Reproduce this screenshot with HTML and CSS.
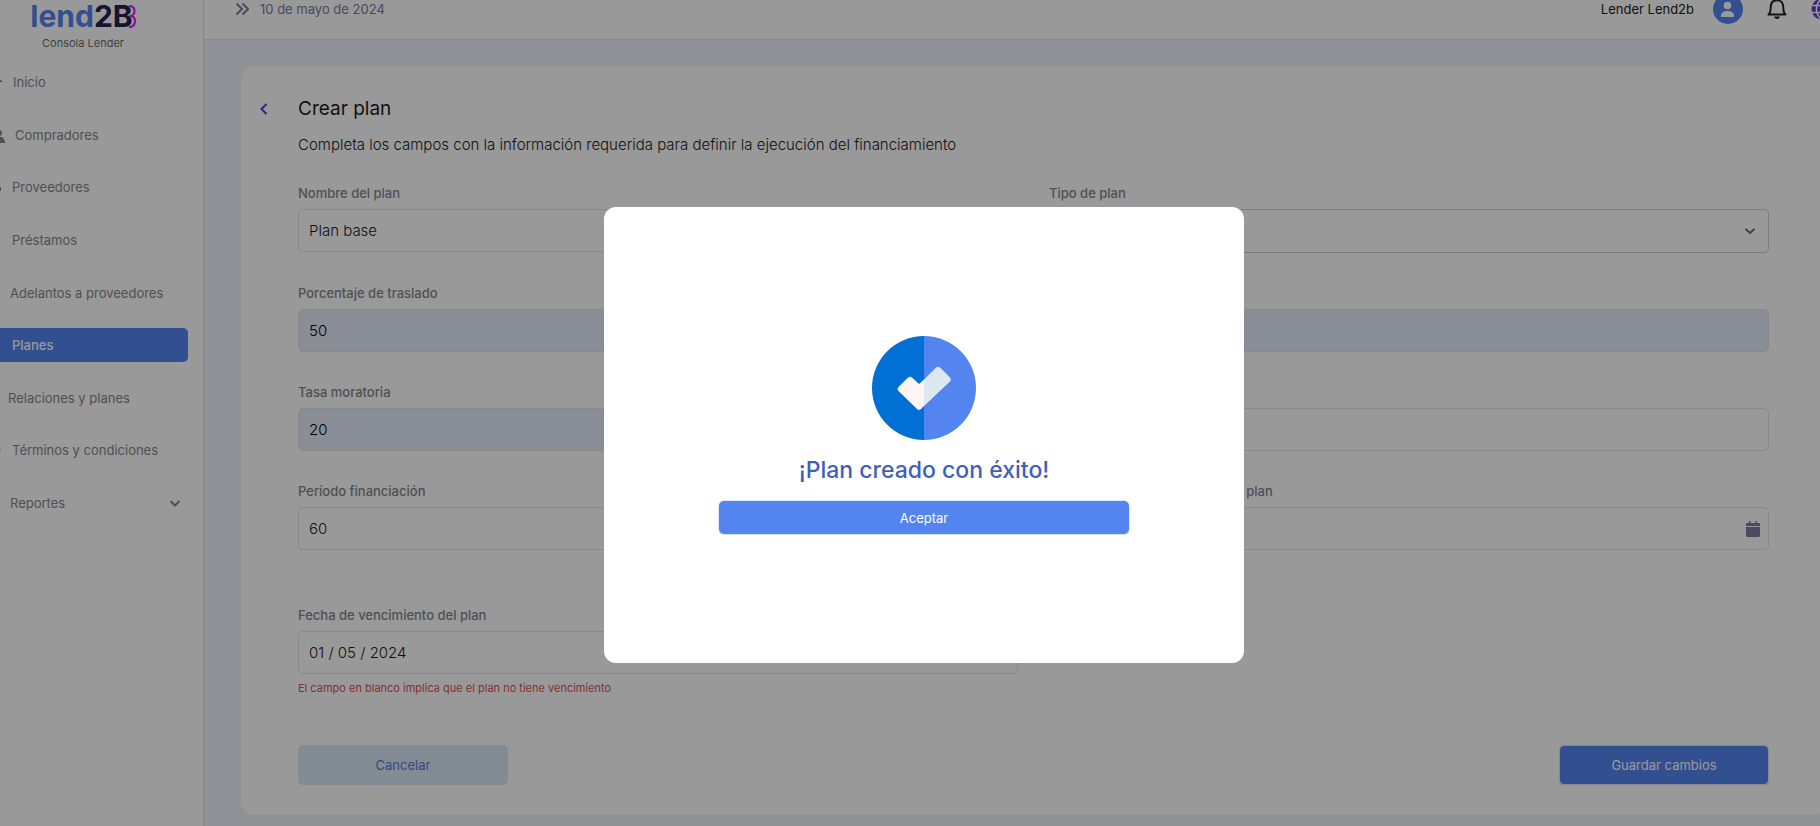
FILE: index.html
```html
<!DOCTYPE html>
<html lang="es">
<head>
  <meta charset="UTF-8" />
  <meta name="viewport" content="width=device-width, initial-scale=1.0">
  <title>Crear plan | lend2B</title>
  <link rel="stylesheet" href="styles.css">
</head>
<body>

  <div class="app">

    <!-- Menú lateral -->
    <aside class="sidebar">
      <div class="brand">
        <div class="logo">
          <span>lend</span><span class="logo-dark">2B</span>
          <svg class="logo-shadow" width="7" height="23" viewBox="0 0 7 23"><path d="M0 1c4 0 5.500 2 5.500 4.800S3.500 10.500 2 11c2.500.5 4 2.500 4 5.200C6 20 3.500 22 0 22"/></svg>
        </div>
        <p class="brand-sub">Consola Lender</p>
      </div>
      <nav class="menu">
        <a href="#" class="menu-item">
          <svg width="21" height="18" viewBox="0 0 21 18"><path d="M10.500 0L21 9h-3v8h-5v-6H8v6H3V9H0z"/></svg>
          Inicio
        </a>
        <a href="#" class="menu-item">
          <svg width="23" height="18" viewBox="0 0 23 18"><circle cx="8" cy="5" r="4"/><path d="M0 17c0-9 16-9 16 0z"/><circle cx="17" cy="7" r="3"/><path d="M17 17h6c0-5-3-7-8-6 1 1 2 3 2 6z"/></svg>
          Compradores
        </a>
        <a href="#" class="menu-item">
          <svg width="20" height="18" viewBox="0 0 20 18"><path d="M1 4h11v9H1zM13 7h4l2 3v3h-6z"/><circle cx="5" cy="14" r="2"/><circle cx="15" cy="14" r="2"/></svg>
          Proveedores
        </a>
        <a href="#" class="menu-item">
          <svg width="20" height="18" viewBox="0 0 20 18"><path d="M1 11h4l4 2h4l4-3 1 2-6 5H1z"/><circle cx="10" cy="5" r="4"/></svg>
          Préstamos
        </a>
        <a href="#" class="menu-item">
          <svg width="18" height="18" viewBox="0 0 18 18"><path d="M1 4h15v10H1z"/></svg>
          Adelantos a proveedores
        </a>
        <a href="#" class="menu-item active">
          <svg width="20" height="18" viewBox="0 0 20 18"><path d="M2 1h13v16H2z"/></svg>
          Planes
        </a>
        <a href="#" class="menu-item">
          <svg width="16" height="18" viewBox="0 0 16 18"><path d="M1 2h6v6H1zM8 10h6v6H8z"/></svg>
          Relaciones y planes
        </a>
        <a href="#" class="menu-item">
          <svg width="20" height="18" viewBox="0 0 20 18"><path d="M2 1h10v16H2zM13 10l5-2 1 1-5 4z"/></svg>
          Términos y condiciones
        </a>
        <a href="#" class="menu-item">
          <svg width="18" height="18" viewBox="0 0 18 18"><path d="M1 9h4v8H1zM6 4h4v13H6zM11 7h4v10h-4z"/></svg>
          Reportes
          <svg class="menu-arrow" width="12" height="12" viewBox="0 0 12 12"><path d="M1.500 4L6 8.500 10.500 4"/></svg>
        </a>
      </nav>
    </aside>

    <div class="content">

      <!-- Barra superior -->
      <header class="topbar">
        <svg class="collapse" width="14" height="14" viewBox="0 0 14 14"><path d="M1.500 1.500L7 7l-5.500 5.500M7.500 1.500L13 7l-5.500 5.500"/></svg>
        <span class="date">10 de mayo de 2024</span>
        <span class="user-name">Lender Lend2b</span>
        <svg class="avatar" width="30" height="30" viewBox="0 0 30 30"><circle cx="15" cy="15" r="15" fill="#5484f0"/><circle cx="14.500" cy="11.500" r="3.800" fill="#fff"/><path d="M8 23v-1.500c0-3 3-4.500 6.500-4.500s6.500 1.500 6.500 4.500V23z" fill="#fff"/></svg>
        <svg class="bell" width="20" height="22" viewBox="0 0 20 22"><path d="M1.500 16.500h17c-1.800-1.600-2.200-3.500-2.200-7C16.300 5 14 2.300 10 2.300S3.700 5 3.700 9.500c0 3.500-.4 5.400-2.200 7z" fill="none" stroke="#222" stroke-width="2" stroke-linejoin="round"/><path d="M7.300 18.500h5.400a2.700 2.400 0 0 1-5.400 0z" fill="#222"/></svg>
        <svg class="globe" width="22" height="22" viewBox="0 0 22 22"><circle cx="11" cy="11" r="10.500" fill="#5b3fd0"/><path d="M0 7.500h22M0 14.500h22M11 0v22M11 0C3.500 6 3.500 16 11 22M11 0c7.500 6 7.500 16 0 22" fill="none" stroke="#fff" stroke-width="1.400"/></svg>
      </header>

      <!-- Formulario -->
      <main class="card">
        <div class="card-head">
          <button type="button" class="back" aria-label="Volver">
            <svg width="8" height="12" viewBox="0 0 8 12"><path d="M6.500 1L1.500 6l5 5"/></svg>
          </button>
          <h1>Crear plan</h1>
        </div>
        <p class="intro">Completa los campos con la información requerida para definir la ejecución del financiamiento</p>

        <form class="plan-form">
          <div class="field">
            <label for="nombre">Nombre del plan</label>
            <input type="text" id="nombre" value="Plan base">
          </div>
          <div class="field">
            <label for="tipo">Tipo de plan</label>
            <div class="select-box">
              <select id="tipo"><option></option></select>
              <svg class="select-arrow" width="12" height="12" viewBox="0 0 12 12"><path d="M1.500 4L6 8 10.500 4"/></svg>
            </div>
          </div>
          <div class="field">
            <label for="traslado">Porcentaje de traslado</label>
            <input type="text" id="traslado" class="filled" value="50">
          </div>
          <div class="field">
            <label for="tasa">Tasa corriente</label>
            <input type="text" id="tasa" class="filled">
          </div>
          <div class="field">
            <label for="mora">Tasa moratoria</label>
            <input type="text" id="mora" class="filled" value="20">
          </div>
          <div class="field">
            <label for="gracia">Días de gracia</label>
            <input type="text" id="gracia">
          </div>
          <div class="field">
            <label for="periodo">Período financiación</label>
            <input type="text" id="periodo" value="60">
          </div>
          <div class="field field-date">
            <label for="inicio">Fecha de puesta en marcha del plan</label>
            <div class="date-box">
              <input type="text" id="inicio">
              <svg class="calendar" width="14" height="16" viewBox="0 0 14 16"><path d="M0 5V3.200C0 2.500.5 2 1.200 2H3V0h1.500v2h5V0H11v2h1.800c.7 0 1.200.5 1.200 1.200V5zM0 6h14v8.500c0 .8-.6 1.500-1.500 1.500h-11C.6 16 0 15.300 0 14.500z"/></svg>
            </div>
          </div>
          <div class="field">
            <label for="vencimiento">Fecha de vencimiento del plan</label>
            <input type="text" id="vencimiento" value="01 / 05 / 2024">
            <p class="hint">El campo en blanco implica que el plan no tiene vencimiento</p>
          </div>

          <div class="actions">
            <button type="button" class="btn btn-light">Cancelar</button>
            <button type="submit" class="btn btn-primary">Guardar cambios</button>
          </div>
        </form>
      </main>
    </div>
  </div>

  <!-- Modal de confirmación -->
  <div class="overlay">
    <div class="modal" role="dialog" aria-modal="true" aria-labelledby="modalTitle">
      <svg class="modal-icon" width="104" height="104" viewBox="0 0 104 104">
        <path d="M52 0a52 52 0 0 0 0 104z" fill="#0070d4"/>
        <path d="M52 0a52 52 0 0 1 0 104z" fill="#5484f0"/>
        <path d="M52 43.500L47 48l-7-6.500q-2-1.500-4 0L26.500 51q-2 2 0 4L45 73q2 2 4 0l3-3z" fill="#fff5f4"/>
        <path d="M52 43.500L64 31.500q2-1.500 4 0l10 10q1.500 2 0 4L52 70z" fill="#dde9f0"/>
      </svg>
      <h2 id="modalTitle">¡Plan creado con éxito!</h2>
      <button type="button" class="btn-accept">Aceptar</button>
    </div>
  </div>

</body>
</html>
```
FILE: styles.css
```css
/* ================================
   Variables
================================= */
:root {
  --color-bg: #f0f2fa;
  --color-primary: #5484f0;
  --color-primary-light: #dae8f8;
  --color-filled: #e5edfa;
  --color-text: #1c1c1c;
  --color-muted: #84868c;
  --color-border: #e2e3e6;
  --color-violet: #5b34e0;
  --color-error: #e05050;
  --font-main: Inter, "Liberation Sans", sans-serif;
}

/* ================================
   Base
================================= */
* {
  margin: 0;
  padding: 0;
  box-sizing: border-box;
}

body {
  font-family: var(--font-main);
  font-size: 13px;
  background: var(--color-bg);
  color: var(--color-text);
  overflow: hidden;
}

a {
  color: inherit;
  text-decoration: none;
}

button, input, select {
  font-family: inherit;
}

button {
  cursor: pointer;
}

.app {
  display: flex;
  min-height: calc(100vh + 21px);
  margin: -21px 0 0 -37px;
}

/* ================================
   Menú lateral
================================= */
.sidebar {
  width: 241px;
  flex-shrink: 0;
  background: #fff;
  border-right: 1px solid var(--color-border);
}

.brand {
  padding-top: 19px;
  text-align: center;
}

.logo {
  display: flex;
  align-items: center;
  justify-content: center;
  font-size: 30px;
  line-height: 36px;
  font-weight: 700;
  color: var(--color-primary);
}

.logo-dark {
  color: #2b214d;
}

.logo-shadow {
  margin-left: -4px;
  fill: none;
  stroke: #e815f5;
  stroke-width: 2;
}

.brand-sub {
  font-size: 11px;
  line-height: 18px;
  color: #6c6c6c;
}

.menu {
  display: flex;
  flex-direction: column;
  justify-content: space-between;
  height: 455px;
  margin-top: 13px;
  padding: 0 15px;
}

.menu-item {
  display: flex;
  align-items: center;
  gap: 10px;
  height: 34px;
  padding: 0 7px 0 4px;
  border-radius: 5px;
  color: var(--color-muted);
}

.menu-item svg {
  fill: currentColor;
}

.menu-item.active {
  background: var(--color-primary);
  color: #fff;
  font-weight: 500;
}

.menu-item .menu-arrow {
  margin-left: auto;
  fill: none;
  stroke: currentColor;
  stroke-width: 2;
}

/* ================================
   Barra superior
================================= */
.content {
  flex: 1;
  min-width: 0;
}

.topbar {
  display: flex;
  align-items: center;
  height: 61px;
  margin-right: -13px;
  background: #fff;
  border-bottom: 1px solid var(--color-border);
  padding-left: 31px;
}

.collapse {
  fill: none;
  stroke: #7d7a99;
  stroke-width: 2;
}

.date {
  margin-left: 11px;
  color: #7d7a99;
}

.user-name {
  margin-left: auto;
}

.avatar {
  margin-left: 19px;
}

.bell {
  margin-left: 24px;
}

.globe {
  margin-left: 24px;
}

/* ================================
   Tarjeta y formulario
================================= */
.card {
  margin: 26px -6px 0 37px;
  padding: 31px 57px 30px;
  background: #fff;
  border-radius: 12px;
}

.card-head {
  display: flex;
  align-items: center;
  margin-left: -38px;
}

.back {
  display: flex;
  width: 38px;
  border: 0;
  background: none;
}

.back svg {
  fill: none;
  stroke: var(--color-violet);
  stroke-width: 2;
}

h1 {
  font-size: 19px;
  line-height: 24px;
  font-weight: 400;
}

.intro {
  margin-top: 14px;
  font-size: 15px;
  line-height: 20px;
  font-weight: 300;
}

.plan-form {
  display: grid;
  grid-template-columns: 1fr 1fr;
  gap: 30px 31px;
  margin-top: 28px;
}

.field label {
  display: block;
  margin-bottom: 6px;
  line-height: 20px;
  font-weight: 500;
  color: var(--color-muted);
}

.field input,
.field select {
  display: block;
  width: 100%;
  height: 43px;
  padding: 0 10px;
  border: 1px solid var(--color-border);
  border-radius: 5px;
  background: #fff;
  color: var(--color-text);
  font-size: 15px;
  font-weight: 300;
}

.field input.filled {
  background: var(--color-filled);
  color: #000;
}

.field select {
  height: 44px;
  border-color: #cccdd4;
  appearance: none;
}

.select-box,
.date-box {
  position: relative;
}

.select-arrow {
  position: absolute;
  top: 16px;
  right: 13px;
  fill: none;
  stroke: #6c6e76;
  stroke-width: 2;
}

.field-date {
  margin-bottom: 25px;
}

.calendar {
  position: absolute;
  top: 14px;
  right: 9px;
  fill: #7f7ba0;
}

.hint {
  margin-top: 6px;
  font-size: 11px;
  line-height: 16px;
  color: var(--color-error);
}

.actions {
  grid-column: 1 / -1;
  display: flex;
  justify-content: space-between;
  margin-top: 19px;
}

.btn {
  width: 210px;
  height: 40px;
  border: 1px solid var(--color-border);
  border-radius: 5px;
  font-size: 13px;
}

.btn-light {
  border-color: var(--color-primary-light);
  background: var(--color-primary-light);
  color: #5a78e0;
}

.btn-primary {
  background: var(--color-primary);
  color: #fff;
}

/* ================================
   Modal
================================= */
.overlay {
  position: fixed;
  inset: 0;
  display: flex;
  align-items: center;
  justify-content: center;
  padding: 44px 0 0 28px;
  background: rgba(0, 0, 0, 0.4);
}

.modal {
  display: flex;
  flex-direction: column;
  align-items: center;
  justify-content: center;
  width: 640px;
  min-height: 456px;
  border-radius: 12px;
  background: #fff;
}

.modal h2 {
  margin: 16px 0;
  font-size: 23px;
  line-height: 29px;
  font-weight: 500;
  color: #3f5fb8;
}

.btn-accept {
  width: 64%;
  height: 33px;
  border: 0;
  border-radius: 5px;
  box-shadow: 0 0 0 1px #dde6f8;
  background: var(--color-primary);
  color: #fff;
  font-size: 13px;
}
```
